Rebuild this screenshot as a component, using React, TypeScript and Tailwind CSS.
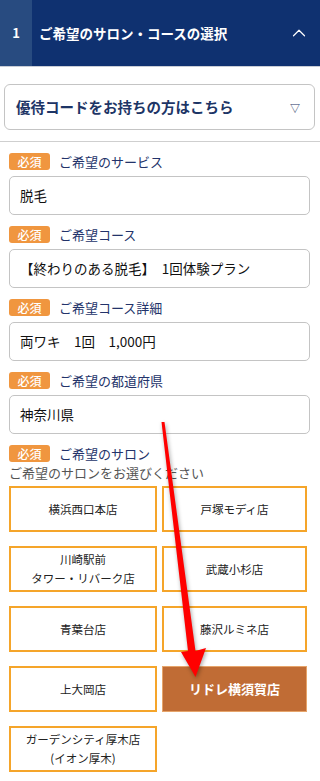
import { ChevronUp } from 'lucide-react'

const fields = [
  { label: 'ご希望のサービス', value: '脱毛' },
  { label: 'ご希望コース', value: '【終わりのある脱毛】　1回体験プラン' },
  { label: 'ご希望コース詳細', value: '両ワキ　1回　1,000円' },
  { label: 'ご希望の都道府県', value: '神奈川県' },
]

const salons: { name: string[]; selected?: boolean }[] = [
  { name: ['横浜西口本店'] },
  { name: ['戸塚モディ店'] },
  { name: ['川崎駅前', 'タワー・リバーク店'] },
  { name: ['武蔵小杉店'] },
  { name: ['青葉台店'] },
  { name: ['藤沢ルミネ店'] },
  { name: ['上大岡店'] },
  { name: ['リドレ横須賀店'], selected: true },
  { name: ['ガーデンシティ厚木店', '(イオン厚木)'] },
]

function RequiredBadge() {
  return (
    <span className="inline-flex h-[17px] w-[41px] items-center justify-center rounded-[3px] bg-[#f0963f] text-[12px] font-medium text-white">
      必須
    </span>
  )
}

function FieldLabel({ label }: { label: string }) {
  return (
    <div className="flex items-center gap-[9px]">
      <RequiredBadge />
      <span className="text-[13px] leading-none text-[#23336a]">{label}</span>
    </div>
  )
}

export default function App() {
  return (
    <div
      className="relative h-[781px] w-[320px] overflow-hidden bg-white"
      style={{ fontFamily: '"Noto Sans CJK JP", "Noto Sans", sans-serif' }}
    >
      {/* step header */}
      <div className="flex h-[67px] border-b border-[#c9cdd6] bg-[#0f3170]">
        <div className="flex w-[32px] items-center justify-center bg-[#284b80] text-[13px] font-bold text-white">
          1
        </div>
        <div className="flex flex-1 items-center pl-[7px] text-[13.5px] font-bold text-white">
          ご希望のサロン・コースの選択
        </div>
        <div className="flex items-center pr-[10px]">
          <ChevronUp className="h-[22px] w-[22px] text-white" strokeWidth={1.3} />
        </div>
      </div>

      {/* coupon toggle */}
      <div className="px-[4px] pt-[17px]">
        <div className="flex h-[46px] w-[311px] items-center justify-between rounded-[6px] border border-[#c4c4c4] pl-[11px] pr-[14px]">
          <span className="text-[14.5px] font-bold text-[#1d3566]">優待コードをお持ちの方はこちら</span>
          <span className="text-[10px] text-[#1d3566]">▽</span>
        </div>
      </div>

      <div className="mt-[11px] border-t border-[#cfcfcf]" />

      {/* form */}
      <div className="px-[9px] pt-[11px]">
        {fields.map((f) => (
          <div key={f.label} className="mb-[11px]">
            <FieldLabel label={f.label} />
            <div className="mt-[6px] flex h-[39px] w-[301px] items-center rounded-[5px] border border-[#c4c4c4] px-[10px] text-[13.5px] text-[#111]">
              {f.value}
            </div>
          </div>
        ))}

        <FieldLabel label="ご希望のサロン" />
        <p className="mt-[2px] text-[13px] leading-[17px] text-[#555]">ご希望のサロンをお選びください</p>

        <div className="mt-[5px] grid grid-cols-[148px_145px] gap-x-[5px] gap-y-[14px]">
          {salons.map((s) =>
            s.selected ? (
              <div
                key={s.name.join()}
                className="flex h-[46px] items-center justify-center border border-[#e6a46a] bg-[#c06c35] text-[13px] font-bold text-white"
              >
                {s.name[0]}
              </div>
            ) : (
              <div
                key={s.name.join()}
                className="flex h-[46px] flex-col items-center justify-center border-2 border-[#f5a52a] text-center text-[11.5px] leading-[19px] text-[#222]"
              >
                {s.name.map((line) => (
                  <span key={line}>{line}</span>
                ))}
              </div>
            )
          )}
        </div>
      </div>

      {/* red annotation arrow */}
      <svg
        className="pointer-events-none absolute left-0 top-0"
        width="320"
        height="781"
        viewBox="0 0 320 781"
        style={{ filter: 'drop-shadow(1px 2px 2px rgba(0,0,0,0.35))' }}
      >
        <polygon
          points="161.5,422 164.5,422 195.5,651 206,648 195.5,677 181,652 188,651"
          fill="#ff0000"
        />
      </svg>
    </div>
  )
}
